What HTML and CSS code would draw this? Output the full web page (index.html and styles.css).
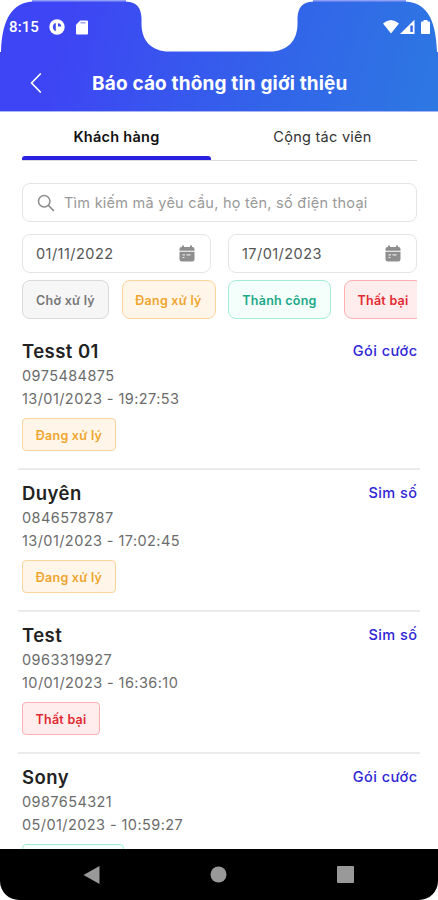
FILE: index.html
```html
<!DOCTYPE html>
<html lang="vi">
<head>
<meta charset="utf-8">
<meta name="viewport" content="width=device-width, initial-scale=1">
<title>Báo cáo thông tin giới thiệu</title>
<link rel="stylesheet" href="styles.css">
</head>
<body>
<div class="phone">
  <header class="header">
    <svg class="cutout" width="438" height="60" viewBox="0 0 438 60" aria-hidden="true">
      <path class="edge" d="M0 0H438V1.500H0Z"/>
      <path class="blank" d="M0 0H32V1.500C13 3 2 18 1 52H0Z"/>
      <path class="blank" d="M438 0H406V1.500C426 3 436 18 437 52H438Z"/>
      <path class="blank" d="M126 0V1.500C136 2 141 7 141.500 18V24C141.500 41 152 51.500 169 51.500H270C287 51.500 297.500 41 297.500 24V18C298 7 303 2 313 1.500V0Z"/>
    </svg>
    <div class="status">
      <span class="clock">8:15</span>
      <svg class="app-dot" width="16" height="16" viewBox="0 0 16 16"><circle cx="8" cy="8" r="7.700" fill="#fff"/><path d="M6.800 4C2.700 5 2.900 10.700 6.800 12.200Z" fill="#3f4df0"/><path d="M9 4.200V7.500H12.300C12.200 5.800 11 4.400 9 4.200Z" fill="#3f4df0"/></svg>
      <svg class="sd" width="12" height="15" viewBox="0 0 12 15"><path d="M4.200.5H11q1 0 1 1v12q0 1-1 1H1q-1 0-1-1V4.700Z" fill="#fff"/><path d="M4.500 2.800H9.500" stroke="#8e97f5" stroke-width="1.300"/></svg>
      <span class="spring"></span>
      <svg width="49" height="16" viewBox="0 0 49 16"><path d="M0 4.500Q8-2.500 16 4.500L8 14.500Z" fill="#fff"/><path d="M31.500.8V15H17Z" fill="#fff"/><path d="M27.300 6.500V13h2.500V6.500Z" fill="#3567e9"/><path d="M40.500 1h4v1.500h1.700q.8 0 .8.800v10.900q0 .8-.8.800h-7.400q-.8 0-.8-.8V3.300q0-.8.800-.8h1.700Z" fill="#fff"/></svg>
    </div>
    <div class="titlebar">
      <svg class="back" width="12" height="20" viewBox="0 0 12 20"><path d="M10.300 1 1.500 10l8.800 9" fill="none" stroke="#fff" stroke-width="1.700" stroke-linecap="round" stroke-linejoin="round"/></svg>
      <h1>Báo cáo thông tin giới thiệu</h1>
    </div>
  </header>

  <main class="content">
    <nav class="tabs">
      <a class="tab active"><span>Khách hàng</span></a>
      <a class="tab"><span>Cộng tác viên</span></a>
    </nav>

    <div class="search">
      <svg width="18" height="18" viewBox="0 0 18 18"><circle cx="7.200" cy="7.200" r="5.700" fill="none" stroke="#8c8c8c" stroke-width="1.500"/><path d="m11.500 11.500 5 5" stroke="#8c8c8c" stroke-width="1.700" stroke-linecap="round"/></svg>
      <span>Tìm kiếm mã yêu cầu, họ tên, số điện thoại</span>
    </div>

    <div class="dates">
      <div class="date"><span>01/11/2022</span><svg width="16" height="17" viewBox="0 0 16 17"><path d="M.5 5.700V4q0-2 2-2H3V.5h2V2h6V.5h2V2h.5q2 0 2 2v1.700ZM.5 6.700h15V14q0 2.500-2.500 2.500H3Q.5 16.500.5 14Z" fill="#8e8e8e"/><path d="M3.500 9.800h2.500M7.500 9.800h4M3.500 12.500h2" stroke="#e6e6e6" stroke-width="1.200"/></svg></div>
      <div class="date"><span>17/01/2023</span><svg width="16" height="17" viewBox="0 0 16 17"><path d="M.5 5.700V4q0-2 2-2H3V.5h2V2h6V.5h2V2h.5q2 0 2 2v1.700ZM.5 6.700h15V14q0 2.500-2.500 2.500H3Q.5 16.500.5 14Z" fill="#8e8e8e"/><path d="M3.500 9.800h2.500M7.500 9.800h4M3.500 12.500h2" stroke="#e6e6e6" stroke-width="1.200"/></svg></div>
    </div>

    <div class="chips">
      <span class="chip wait">Chờ xử lý</span>
      <span class="chip busy">Đang xử lý</span>
      <span class="chip done">Thành công</span>
      <span class="chip fail">Thất bại</span>
    </div>

    <section class="list">
      <article class="item">
        <div class="row"><h2>Tesst 01</h2><a class="kind">Gói cước</a></div>
        <p>0975484875</p><p class="time">13/01/2023 - 19:27:53</p>
        <span class="tag busy">Đang xử lý</span>
      </article>
      <article class="item">
        <div class="row"><h2>Duyên</h2><a class="kind">Sim số</a></div>
        <p>0846578787</p><p class="time">13/01/2023 - 17:02:45</p>
        <span class="tag busy">Đang xử lý</span>
      </article>
      <article class="item">
        <div class="row"><h2>Test</h2><a class="kind">Sim số</a></div>
        <p>0963319927</p><p class="time">10/01/2023 - 16:36:10</p>
        <span class="tag fail">Thất bại</span>
      </article>
      <article class="item">
        <div class="row"><h2>Sony</h2><a class="kind">Gói cước</a></div>
        <p>0987654321</p><p class="time">05/01/2023 - 10:59:27</p>
        <span class="tag done"></span>
      </article>
    </section>
  </main>

  <footer class="navbar">
    <svg width="17" height="20" viewBox="0 0 17 20"><path d="M16.500 1v18L.5 10Z" fill="#999"/></svg>
    <svg width="17" height="17" viewBox="0 0 17 17"><circle cx="8.500" cy="8.500" r="8" fill="#999"/></svg>
    <svg width="17" height="17" viewBox="0 0 17 17"><rect width="17" height="17" rx="1" fill="#999"/></svg>
  </footer>
</div>
</body>
</html>
```

FILE: styles.css
```css
* { box-sizing: border-box; }
body { margin: 0; background: #fff; font-family: Inter, "Noto Sans", sans-serif; }
h1, h2, p { margin: 0; }
svg { display: block; flex: none; }

.phone { width: 438px; height: 900px; display: flex; flex-direction: column; overflow: hidden; background: #fff; }

.header { position: relative; flex: none; height: 112px; background: linear-gradient(105deg, #3e45f4 15%, #3265e9 65%, #2d78e2 100%); border-bottom: 1px solid #a9b4f5; color: #fff; }
.cutout { position: absolute; left: 0; top: 0; }
.blank { fill: #fff; }
.edge { fill: #8f9cf5; }
.status { position: relative; display: flex; align-items: center; height: 54px; padding: 0 6px 0 9px; }
.clock { width: 40px; font: 500 15px/18px Roboto, sans-serif; letter-spacing: 0.100px; }
.sd { margin-left: 11px; }
.spring { flex: 1; }
.titlebar { display: flex; align-items: center; height: 58px; padding-left: 30px; }
.titlebar h1 { margin-left: 50px; padding-top: 2px; font-size: 19px; line-height: 24px; font-weight: 700; letter-spacing: 0.160px; white-space: nowrap; }

.content { flex: 1; min-height: 0; overflow: hidden; padding: 0 21px 0 22px; }
.tabs { display: flex; height: 49px; border-bottom: 1px solid #dcdcdc; }
.tab { position: relative; flex: 1; padding: 16px 0 0 17px; text-align: center; font-size: 14.500px; line-height: 18px; letter-spacing: 0.270px; color: #333; white-space: nowrap; }
.tab.active { flex: 0 0 189px; padding-left: 0; font-weight: 600; color: #111; }
.tab.active::after { content: ""; position: absolute; left: 0; right: 0; bottom: 0; height: 4px; border-radius: 3px 3px 0 0; background: #2a20e0; }

.search { display: flex; align-items: center; gap: 9px; height: 39px; margin-top: 22px; padding-left: 14px; border: 1px solid #e5e5e5; border-radius: 8px; font-size: 14.500px; letter-spacing: 0.250px; color: #999; white-space: nowrap; }
.dates { display: grid; grid-template-columns: 189px 189px; gap: 17px; margin-top: 12px; }
.date { display: flex; align-items: center; justify-content: space-between; height: 39px; padding: 0 15px 0 13px; border: 1px solid #e5e5e5; border-radius: 8px; font-size: 14.500px; letter-spacing: 0.450px; color: #555; }

.chips { display: flex; margin-top: 7px; gap: 12.500px; overflow: hidden; }
.chip, .tag { display: flex; align-items: center; justify-content: center; flex: none; padding-top: 1px; border: 1px solid; font-size: 12.500px; letter-spacing: 0.240px; font-weight: 600; white-space: nowrap; }
.chip { height: 39px; border-radius: 8px; }
.wait { color: #777; background: #f6f6f6; border-color: #d9d9d9; }
.busy { color: #efa52e; background: #fff5e8; border-color: #fbd49b; }
.done { color: #20a889; background: #f4fffb; border-color: #a5ecd5; }
.fail { color: #e12a31; background: #ffecec; border-color: #fab0b2; }
.chip.wait { width: 87px; }
.chip.busy { width: 94px; }
.chip.done { width: 103px; }
.chip.fail { width: 79px; }

.list { margin: 14px -3px 0 -4px; }
.item { height: 142px; padding: 11px 3px 0 4px; border-bottom: 2px solid #ebebeb; }
.item:first-child { height: 137px; padding-top: 6px; }
.row { display: flex; justify-content: space-between; align-items: center; height: 24px; }
.item h2 { font-size: 18.500px; line-height: 24px; font-weight: 600; letter-spacing: 0.450px; color: #222; }
.kind { padding-bottom: 1px; font-size: 14.500px; font-weight: 500; letter-spacing: 0.450px; margin-right: -0.500px; color: #3027d6; }
.item p { margin-top: 2px; font-size: 14.500px; line-height: 22px; letter-spacing: 0.420px; color: #6c6c6c; }
.item .time { margin-top: 0.500px; }
.item .tag { width: 94px; height: 33px; margin-top: 8.500px; border-radius: 4px; }
.item .tag.fail { width: 78px; }
.item .tag.done { width: 102px; }

.navbar { flex: none; display: flex; align-items: center; justify-content: space-between; height: 51px; padding: 0 84px 0 83px; background: #000; border-radius: 0 0 19px 19px; }
```
